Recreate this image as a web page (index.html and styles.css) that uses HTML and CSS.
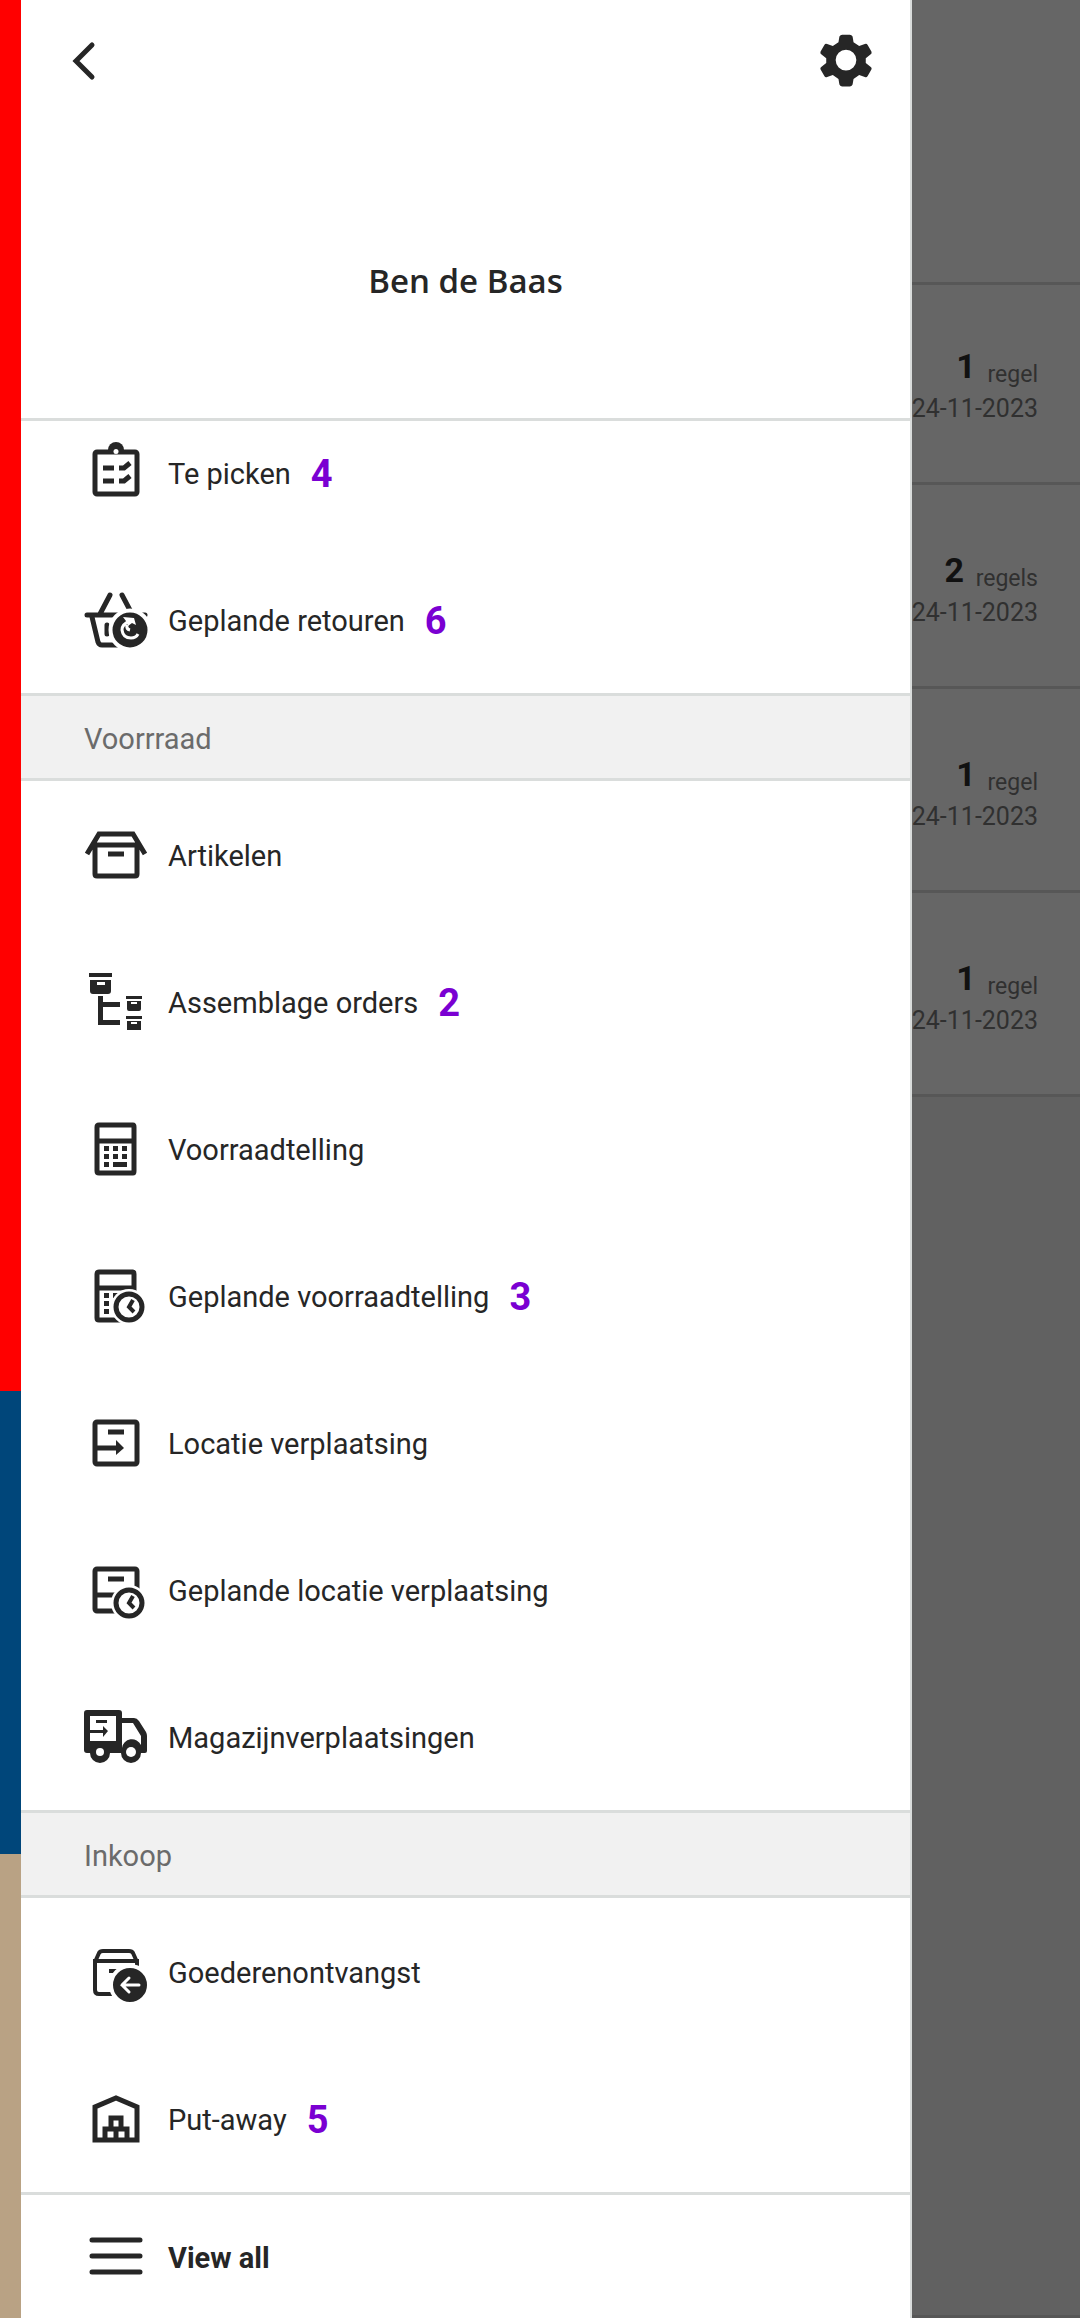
FILE: index.html
```html
<!DOCTYPE html>
<html lang="nl">
<head>
    <meta charset="UTF-8">
    <meta name="viewport" content="width=device-width, initial-scale=1.0">
    <title>Menu</title>
    <link rel="stylesheet" href="styles.css">
</head>
<body>
    <div class="stripe">
        <div class="stripe-red"></div>
        <div class="stripe-blue"></div>
        <div class="stripe-sand"></div>
    </div>

    <div class="drawer">
        <header class="drawer-header">
            <div class="toolbar">
                <button class="icon-button" aria-label="Terug">
                    <svg viewBox="0 0 64 64"><path class="line round" d="M39 16 23 32l16 16"/></svg>
                </button>
                <button class="icon-button" aria-label="Instellingen">
                    <svg viewBox="-2 -1 68 68"><path class="fill" fill-rule="evenodd" d="M28 5h8q2 0 3 2l1 6 6 4 6-2q2-1 3 1l4 7q1 2-1 3l-5 4v5l5 4q2 1 1 3l-4 7q-1 2-3 1l-6-2-6 4-1 6q-1 2-3 2h-8q-2 0-3-2l-1-6-6-4-6 2q-2 1-3-1l-4-7q-1-2 1-3l5-4v-5l-5-4q-2-1-1-3l4-7q1-2 3-1l6 2 6-4 1-6q1-2 3-2zM32 21a11 11 0 1 0 0 22 11 11 0 0 0 0-22z"/></svg>
                </button>
            </div>
            <h1 class="user-name">Ben de Baas</h1>
        </header>

        <nav class="menu" id="menu">
            <a class="menu-item" href="#">
                <svg viewBox="0 0 64 64"><rect class="line" x="11" y="11" width="42" height="42" rx="2"/><path class="fill" d="M24 9a8 8 0 0 1 16 0z"/><circle class="cut" cx="32" cy="10.500" r="2.500"/><path class="line" d="M19 27h11M19 40h11M35 27h5l6-5M35 40h5l6-5"/></svg>
                <span>Te picken</span>
                <span class="count">4</span>
            </a>
            <a class="menu-item" href="#">
                <svg viewBox="0 0 64 64"><path class="line round" d="M3 27h58M16 26 26 7M48 26 38 7M8 29l6 25q1 3 4 3h20M23 37v9"/><circle class="fill" cx="46" cy="42" r="19.500" stroke="#fff" stroke-width="4"/><path d="M46 33q-8 3-8 9 1 8 9 8 5 0 7-4M43 37q-1 4 3 5" fill="none" stroke="#fff" stroke-width="3"/><path class="cut" d="m39 29 11 1 2 7-4-2-4 3-2-5z"/></svg>
                <span>Geplande retouren</span>
                <span class="count">6</span>
            </a>

            <h2 class="section-title">Voorrraad</h2>
            <a class="menu-item" href="#">
                <svg viewBox="0 0 64 64"><path class="line" d="M11 22v29q0 2 2 2h38q2 0 2-2V22zM3 31 15 11h34l12 20M24 31h16"/></svg>
                <span>Artikelen</span>
            </a>
            <a class="menu-item" href="#">
                <svg viewBox="0 0 64 64"><path class="fill" d="M5 3h23v4H5zM6 10h21v11q0 3-3 3H9q-3 0-3-3zM14 26h5v6h17v5H19v13h17v5H14zM42 26h16v3H42zM43 31h14v8q0 2-2 2H45q-2 0-2-2zM42 46h16v3H42zM43 51h14v9H43z"/><path class="cut" d="M13 12h8v3h-8zM47 32h6v2h-6zM47 52h6v2h-6z"/></svg>
                <span>Assemblage orders</span>
                <span class="count">2</span>
            </a>
            <a class="menu-item" href="#">
                <svg viewBox="0 0 64 64"><path class="line" d="M15 8h34q1 0 1 2v44q0 2-1 2H15q-2 0-2-2V10q0-2 2-2zM13 24h37"/><path class="fill" d="M20 29h5v5h-5zM29 29h5v5h-5zM38 29h5v5h-5zM20 37h5v5h-5zM29 37h5v5h-5zM38 37h5v5h-5zM20 45h5v5h-5zM29 45h14v5H29z"/></svg>
                <span>Voorraadtelling</span>
            </a>
            <a class="menu-item" href="#">
                <svg viewBox="0 0 64 64"><path class="line" d="M15 8h34q1 0 1 2v44q0 2-1 2H15q-2 0-2-2V10q0-2 2-2zM13 24h37"/><path class="fill" d="M20 29h5v5h-5zM29 29h5v5h-5zM20 37h5v5h-5zM20 45h5v5h-5z"/><circle class="cut" cx="45" cy="43" r="18"/><circle class="line" cx="45" cy="43" r="13"/><path class="line thin" d="m49 36-4 7 5 5"/></svg>
                <span>Geplande voorraadtelling</span>
                <span class="count">3</span>
            </a>
            <a class="menu-item" href="#">
                <svg viewBox="0 0 64 64"><rect class="line" x="11" y="11" width="42" height="42" rx="2"/><path class="line" d="M24 21h16M13 37h22"/><path class="fill" d="M32 29v15l8-7z"/></svg>
                <span>Locatie verplaatsing</span>
            </a>
            <a class="menu-item" href="#">
                <svg viewBox="0 0 64 64"><rect class="line" x="11" y="11" width="42" height="42" rx="2"/><path class="line" d="M24 21h16M13 37h22"/><circle class="cut" cx="45" cy="45" r="18"/><circle class="line" cx="45" cy="45" r="13"/><path class="line thin" d="m49 38-4 7 5 5"/></svg>
                <span>Geplande locatie verplaatsing</span>
            </a>
            <a class="menu-item" href="#">
                <svg viewBox="0 0 64 64"><path class="fill" fill-rule="evenodd" d="M3 5h32q3 0 3 3v5h12q3 0 5 3l7 11q1 2 1 4v15q0 2-2 2h-4a10 10 0 0 1-20 0H26a10 10 0 0 1-20 0H3q-3 0-3-3V8q0-3 3-3zM6 11v25h26V11zM38 18v25a10 10 0 0 1 19-3V31l-8-13z"/><circle class="cut" cx="16" cy="47" r="4"/><circle class="cut" cx="47" cy="47" r="5"/><path class="fill" d="M12 15h11v3H12zM6 25h13v-4l5 5-5 6v-4H6z"/></svg>
                <span>Magazijnverplaatsingen</span>
            </a>

            <h2 class="section-title">Inkoop</h2>
            <a class="menu-item" href="#">
                <svg viewBox="0 0 64 64"><path class="line thin" d="M11 21v29q0 4 4 4h34q4 0 4-4V21zM11 22l4-9q1-2 4-2h26q3 0 4 2l4 9M25 31h14"/><circle class="fill" cx="46" cy="45" r="19" stroke="#fff" stroke-width="4"/><path d="M55 45H38m7-7-7 7 7 7" fill="none" stroke="#fff" stroke-width="3" stroke-linecap="round"/></svg>
                <span>Goederenontvangst</span>
            </a>
            <a class="menu-item" href="#">
                <svg viewBox="0 0 64 64"><path class="line" d="M11 53V20l21-9 21 9v33zM21 52V42h22v10M27 42V31h10v11M32 42v10"/></svg>
                <span>Put-away</span>
                <span class="count">5</span>
            </a>
        </nav>

        <a class="view-all" href="#">
            <svg viewBox="0 0 64 64"><path class="line round" d="M8 15h48M8 31h48M8 47h48"/></svg>
            <span>View all</span>
        </a>
    </div>

    <main class="orders">
        <div class="orders-header"></div>
        <div class="order"><p><b>1</b> regel</p><p class="date">24-11-2023</p></div>
        <div class="order"><p><b>2</b> regels</p><p class="date">24-11-2023</p></div>
        <div class="order"><p><b>1</b> regel</p><p class="date">24-11-2023</p></div>
        <div class="order"><p><b>1</b> regel</p><p class="date">24-11-2023</p></div>
        <div class="orders-rest"></div>
    </main>

    <script>
        document.getElementById("menu").scrollTop = 22;
    </script>
</body>
</html>
```
FILE: styles.css
```css
* {
    box-sizing: border-box;
}
body {
    margin: 0;
    height: 100vh;
    display: flex;
    overflow: hidden;
    font-family: Roboto, sans-serif;
    font-size: 29px;
    color: #262626;
    background: #666;
}
h1, h2, p {
    margin: 0;
}
.stripe {
    width: 21px;
    flex-shrink: 0;
    display: flex;
    flex-direction: column;
}
.stripe-red {
    flex: 3;
    background: #ff0000;
}
.stripe-blue {
    flex: 1;
    background: #00467a;
}
.stripe-sand {
    flex: 1;
    background: #b9a284;
}
.drawer {
    flex: 1;
    min-width: 0;
    display: flex;
    flex-direction: column;
    background: #fff;
    border-right: 2px solid #dadddc;
}
.drawer-header {
    height: 421px;
    flex-shrink: 0;
    border-bottom: 3px solid #dadddc;
}
.toolbar {
    display: flex;
    justify-content: space-between;
    padding: 29px 32px;
}
.icon-button {
    width: 64px;
    height: 64px;
    padding: 0;
    border: 0;
    background: none;
    cursor: pointer;
}
svg {
    width: 64px;
    height: 64px;
    display: block;
    flex-shrink: 0;
}
.line {
    fill: none;
    stroke: #262626;
    stroke-width: 5;
}
.thin {
    stroke-width: 4;
}
.round {
    stroke-linecap: round;
}
.fill {
    fill: #262626;
}
.cut {
    fill: #fff;
}
.user-name {
    margin-top: 137px;
    font-family: "Open Sans", sans-serif;
    font-size: 33px;
    font-weight: 600;
    line-height: 44px;
    text-align: center;
}
.menu {
    flex: 1;
    min-height: 0;
    overflow-y: auto;
    scrollbar-width: none;
}
.menu-item, .view-all {
    height: 147px;
    display: flex;
    align-items: center;
    gap: 20px;
    padding-left: 63px;
    color: inherit;
    text-decoration: none;
}
.menu-item span, .view-all span {
    padding-top: 2px;
}
.menu-item .count {
    font-size: 38px;
    font-weight: bold;
    color: #7a00d2;
}
.section-title {
    height: 88px;
    padding-left: 63px;
    border-top: 3px solid #dadddc;
    border-bottom: 3px solid #dadddc;
    background: #f1f1f1;
    color: #6b6b6b;
    font-size: 29px;
    font-weight: normal;
    line-height: 86px;
}
.view-all {
    height: 126px;
    flex-shrink: 0;
    border-top: 3px solid #dadddc;
    font-weight: bold;
}
.orders {
    width: 168px;
    flex-shrink: 0;
    display: flex;
    flex-direction: column;
    color: #303030;
}
.orders-header {
    height: 285px;
    flex-shrink: 0;
    margin-bottom: -4px;
    border-bottom: 3px solid #575757;
}
.order {
    height: 204px;
    flex-shrink: 0;
    display: flex;
    flex-direction: column;
    align-items: flex-end;
    justify-content: flex-end;
    padding: 0 42px 59px 0;
    border-bottom: 3px solid #575757;
    font-size: 23px;
    line-height: 40px;
    white-space: nowrap;
}
.order b {
    margin-right: 6px;
    font-size: 34px;
    line-height: 32px;
    vertical-align: 4px;
    color: #111;
}
.order .date {
    font-size: 25px;
    line-height: 28px;
}
.orders-rest {
    flex: 1;
    background: #616161;
    border-bottom: 3px solid #575757;
}
```
